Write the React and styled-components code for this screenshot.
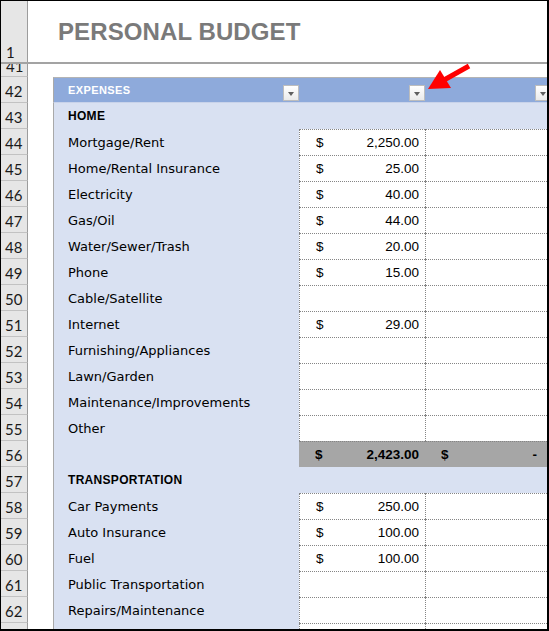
import React from 'react';
import styled, { createGlobalStyle, css } from 'styled-components';

const Global = createGlobalStyle`
  html, body { margin: 0; padding: 0; background: #fff; }
  body { width: 549px; height: 631px; overflow: hidden; }
`;

const Frame = styled.div`
  position: relative;
  width: 549px;
  height: 631px;
  box-sizing: border-box;
  border: 1px solid #000;
  border-right-width: 2px;
  border-bottom-width: 2px;
  overflow: hidden;
  background: #fff;
`;

const Row = styled.div`
  display: flex;
  height: ${(p) => p.$h}px;
  flex: none;
  ${(p) => p.$freeze && css`border-bottom: 2px solid #a3a3a3;`}
`;

const RowHead = styled.div`
  width: 27px;
  flex: none;
  box-sizing: border-box;
  background: #e6e6e6;
  border-right: 1px solid #9c9c9c;
  border-bottom: ${(p) => (p.$noLine ? 'none' : '1px solid #c2c2c2')};
  font-family: Lato, 'Open Sans', sans-serif;
  font-size: 15px;
  color: #1a1a1a;
  display: flex;
  align-items: ${(p) => (p.$bottom ? 'flex-end' : 'center')};
  padding: ${(p) => (p.$bottom ? '0 0 2px 5px' : '3px 0 0 4px')};
  overflow: hidden;
  line-height: 1;
`;

const TitleCell = styled.div`
  flex: 1;
  padding: 19px 0 0 30px;
  font-family: 'Liberation Sans', Arial, sans-serif;
  font-weight: bold;
  font-size: 24px;
  line-height: 24px;
  color: #7a7a7a;
  letter-spacing: 0.1px;
`;

const Gutter = styled.div`
  width: 25px;
  flex: none;
  background: #fff;
`;

const LabelCell = styled.div`
  width: 246px;
  flex: none;
  box-sizing: border-box;
  border-left: 1px solid #a9a9a9;
  display: flex;
  align-items: ${(p) => (p.$variant === 'header' ? 'stretch' : 'center')};
  padding-left: 14px;
  background: ${(p) => (p.$variant === 'header' ? '#8eaadb' : '#d9e1f2')};
  ${(p) => p.$variant === 'header' && css`border-top: 1px solid #b4b4b4; border-bottom: 1px solid #c9d3ea;`}
`;

const LabelText = styled.span`
  font-family: 'DejaVu Sans', sans-serif;
  font-size: 13px;
  color: #000;
  white-space: nowrap;
  padding-top: 1px;
`;

const SectionText = styled.span`
  font-family: 'Liberation Sans', Arial, sans-serif;
  font-weight: bold;
  font-size: 12px;
  letter-spacing: 0.3px;
  color: #000;
  white-space: nowrap;
`;

const HeaderText = styled.span`
  flex: 1;
  align-self: center;
  font-family: 'Liberation Sans', Arial, sans-serif;
  font-weight: bold;
  font-size: 11px;
  letter-spacing: 0.4px;
  color: #fff;
  white-space: nowrap;
`;

const valueBg = {
  header: '#8eaadb',
  band: '#d9e1f2',
  white: '#fff',
  total: '#a6a6a6',
};

const ValueCell = styled.div`
  width: 126px;
  flex: none;
  box-sizing: border-box;
  background: ${(p) => valueBg[p.$variant]};
  display: flex;
  align-items: center;
  justify-content: space-between;
  padding: 0 ${(p) => (p.$pr != null ? p.$pr : 6)}px 0 16px;
  font-family: 'Liberation Sans', Arial, sans-serif;
  font-size: 13.5px;
  color: #000;
  ${(p) => p.$variant === 'white' && css`border-top: 1px dotted #858585; border-left: 1px dotted #858585;`}
  ${(p) => p.$variant === 'total' && css`border-top: 1px dotted #858585; font-weight: bold;`}
  ${(p) => p.$variant === 'header' && css`
    border-top: 1px solid #b4b4b4;
    border-bottom: 1px solid #c9d3ea;
    align-items: flex-end;
    justify-content: flex-end;
    padding: 0 0 1px 0;
  `}
`;

const HeaderCell = styled(LabelCell)`
  padding-right: 0;
  padding-bottom: 1px;
  align-items: flex-end;
`;

const DropButton = styled.div`
  width: 16px;
  height: 16px;
  flex: none;
  box-sizing: border-box;
  border: 1px solid #bdbdbd;
  background: linear-gradient(#ffffff, #eaeaea);
  display: flex;
  align-items: center;
  justify-content: center;
  align-self: flex-end;
  &::after {
    content: '';
    border-left: 3.5px solid transparent;
    border-right: 3.5px solid transparent;
    border-top: 4px solid #5f5f5f;
    margin-top: 1px;
  }
`;

const ArrowOverlay = styled.svg`
  position: absolute;
  left: -1px;
  top: -1px;
  pointer-events: none;
`;

const home = [
  ['Mortgage/Rent', '2,250.00'],
  ['Home/Rental Insurance', '25.00'],
  ['Electricity', '40.00'],
  ['Gas/Oil', '44.00'],
  ['Water/Sewer/Trash', '20.00'],
  ['Phone', '15.00'],
  ['Cable/Satellite', null],
  ['Internet', '29.00'],
  ['Furnishing/Appliances', null],
  ['Lawn/Garden', null],
  ['Maintenance/Improvements', null],
  ['Other', null],
];

const transport = [
  ['Car Payments', '250.00'],
  ['Auto Insurance', '100.00'],
  ['Fuel', '100.00'],
  ['Public Transportation', null],
  ['Repairs/Maintenance', null],
];

function ItemRow({ n, label, value }) {
  return (
    <Row $h={26}>
      <RowHead>{n}</RowHead>
      <Gutter />
      <LabelCell>
        <LabelText>{label}</LabelText>
      </LabelCell>
      <ValueCell $variant="white">
        {value && <span>$</span>}
        {value && <span>{value}</span>}
      </ValueCell>
      <ValueCell $variant="white" />
    </Row>
  );
}

function SectionRow({ n, title }) {
  return (
    <Row $h={26}>
      <RowHead>{n}</RowHead>
      <Gutter />
      <LabelCell>
        <SectionText>{title}</SectionText>
      </LabelCell>
      <ValueCell $variant="band" />
      <ValueCell $variant="band" />
    </Row>
  );
}

export default function App() {
  return (
    <>
      <Global />
      <Frame>
        <Row $h={61} $freeze>
          <RowHead $bottom $noLine>1</RowHead>
          <TitleCell>PERSONAL BUDGET</TitleCell>
        </Row>
        <Row $h={13}>
          <RowHead $bottom>41</RowHead>
          <Gutter />
        </Row>
        <Row $h={26}>
          <RowHead>42</RowHead>
          <Gutter />
          <HeaderCell $variant="header">
            <HeaderText>EXPENSES</HeaderText>
            <DropButton />
          </HeaderCell>
          <ValueCell $variant="header">
            <DropButton />
          </ValueCell>
          <ValueCell $variant="header">
            <DropButton />
          </ValueCell>
        </Row>
        <SectionRow n={43} title="HOME" />
        {home.map(([label, value], i) => (
          <ItemRow key={label} n={44 + i} label={label} value={value} />
        ))}
        <Row $h={26}>
          <RowHead>56</RowHead>
          <Gutter />
          <LabelCell />
          <ValueCell $variant="total">
            <span>$</span>
            <span>2,423.00</span>
          </ValueCell>
          <ValueCell $variant="total" $pr={14}>
            <span>$</span>
            <span>-</span>
          </ValueCell>
        </Row>
        <SectionRow n={57} title="TRANSPORTATION" />
        {transport.map(([label, value], i) => (
          <ItemRow key={label} n={58 + i} label={label} value={value} />
        ))}
        <ItemRow n={63} label="" value={null} />
        <ArrowOverlay width="549" height="631" viewBox="0 0 549 631">
          <polygon points="428,89 440,70 451,88" fill="#ff0000" />
          <line x1="444" y1="80" x2="469" y2="66" stroke="#ff0000" strokeWidth="5" strokeLinecap="butt" />
        </ArrowOverlay>
      </Frame>
    </>
  );
}
